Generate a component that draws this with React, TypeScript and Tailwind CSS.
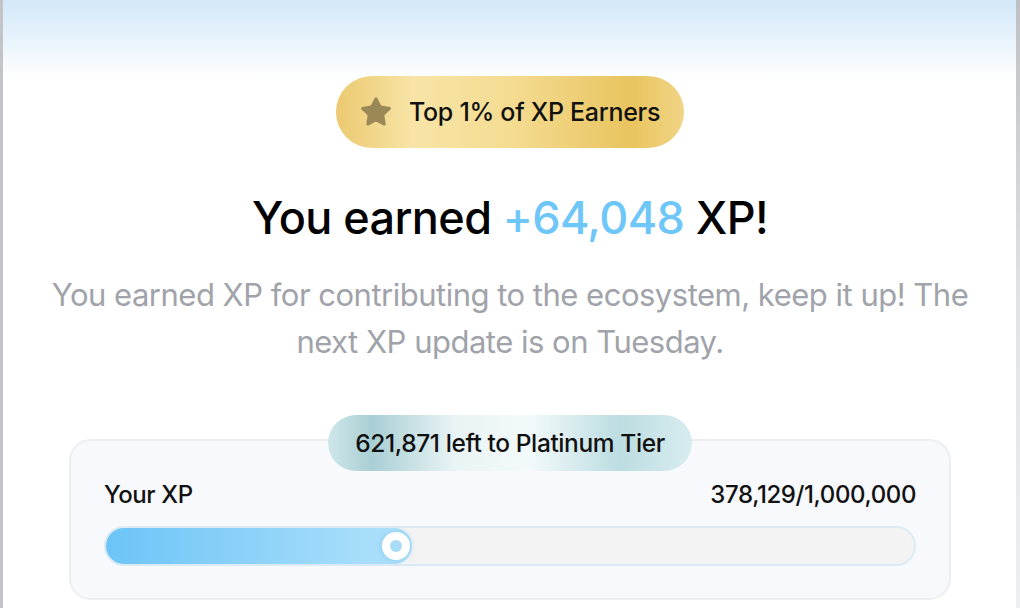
import { Star } from "lucide-react";

const current = 378129;
const total = 1000000;

export default function App() {
  const pct = (current / total) * 100;
  return (
    <div className="relative h-[608px] w-[1020px] overflow-hidden bg-white font-['Inter',sans-serif]">
      <div className="pointer-events-none absolute inset-x-0 top-0 h-[80px] bg-gradient-to-b from-[#d3e8f8] via-[#e8f3fc] to-white" />
      <div className="absolute inset-y-0 left-0 w-[3px] bg-[#c3c4c8]" />
      <div className="absolute inset-y-0 right-0 w-[4px] bg-gradient-to-b from-[#bfc0c4] via-[#e2e3e6] to-[#eeeff1]" />

      <div className="relative flex flex-col items-center pt-[76px]">
        <div className="flex h-[72px] w-[348px] items-center gap-4 rounded-full bg-[linear-gradient(90deg,#ecc970_0%,#f7e4a6_22%,#f4dc92_50%,#e9c45f_85%,#f1d486_100%)] pl-[23px]">
          <Star className="h-[34px] w-[34px] fill-[#9a8857] text-[#9a8857]" strokeWidth={1} />
          <span className="pt-[1px] text-[25px] font-medium tracking-[-0.3px] text-[#111]">Top 1% of XP Earners</span>
        </div>

        <h1 className="mt-[42px] text-[45px] font-medium leading-[56px] tracking-[-0.6px] text-black">
          You earned <span className="text-[#6ec6f9]">+64,048</span> XP!
        </h1>

        <p className="mt-[25px] w-[940px] text-center text-[31px] leading-[47px] tracking-[-0.5px] text-[#a1a3aa]">
          You earned XP for contributing to the ecosystem, keep it up! The next XP update is on Tuesday.
        </p>

        <div className="relative mt-[74px] w-[882px] rounded-[22px] border-2 border-[#eceef2] bg-[#f8f9fc] px-[33px] pb-[32px] pt-[36px]">
          <div className="absolute left-1/2 top-[-26px] flex h-[56px] w-[364px] -translate-x-1/2 items-center justify-center rounded-full bg-[linear-gradient(90deg,#cfe6ea_0%,#a9cfd4_12%,#e9f4f5_35%,#f4fafb_55%,#bcdde1_80%,#d8ecef_100%)]">
            <span className="text-[24.5px] font-medium tracking-[-0.4px] text-[#111]">621,871 left to Platinum Tier</span>
          </div>
          <div className="flex items-center justify-between text-[24px] font-medium tracking-[-0.4px] text-[#111]">
            <span>Your XP</span>
            <span>378,129/1,000,000</span>
          </div>
          <div className="mt-[13px] h-[40px] w-full rounded-full border-2 border-[#dcebf3] bg-[#f3f3f3]">
            <div
              className="relative h-full rounded-full bg-[linear-gradient(90deg,#6cc4f7,#b2e2fb)]"
              style={{ width: `${pct}%` }}
            >
              <div className="absolute right-[2px] top-1/2 flex h-[28px] w-[28px] -translate-y-1/2 items-center justify-center rounded-full bg-white shadow-[0_0_6px_rgba(100,180,230,0.5)]">
                <div className="h-[12px] w-[12px] rounded-full bg-[#a8dcf8]" />
              </div>
            </div>
          </div>
        </div>
      </div>
    </div>
  );
}
